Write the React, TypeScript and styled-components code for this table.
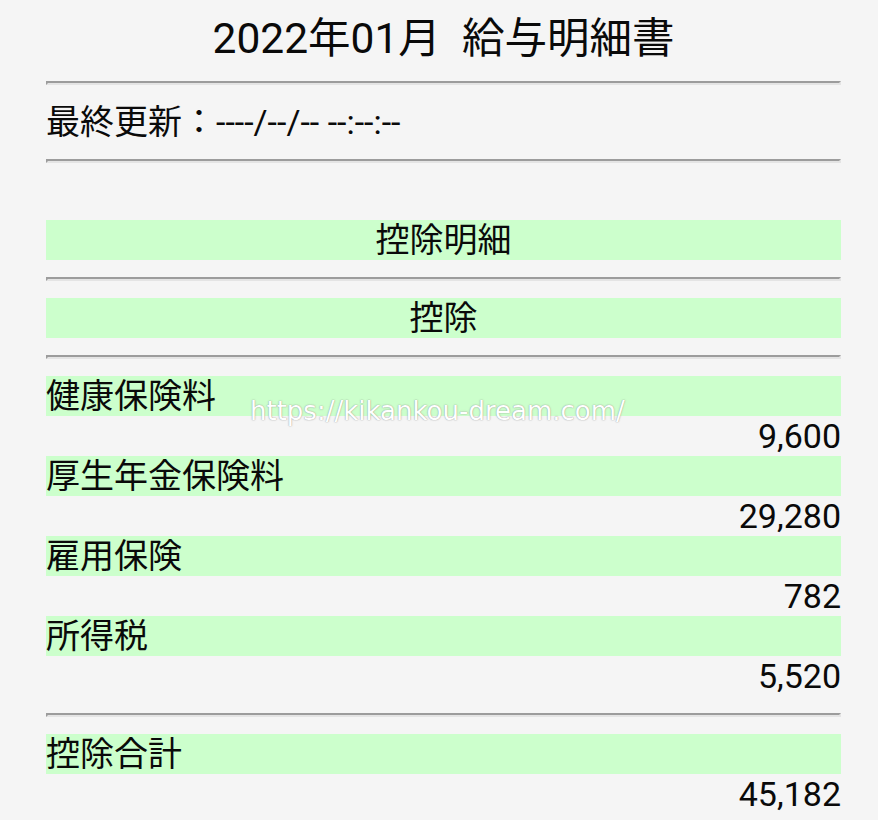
import React from "react";
import styled, { createGlobalStyle } from "styled-components";

const GlobalStyle = createGlobalStyle`
  html, body {
    margin: 0;
    padding: 0;
    background: #f5f5f5;
  }
  body {
    font-family: Roboto, "Noto Sans CJK JP", "Noto Sans", sans-serif;
    color: #0a0a0a;
  }
`;

const Page = styled.div`
  position: relative;
  box-sizing: border-box;
  width: 795px;
  margin-left: 46px;
  padding-top: 14px;
  padding-bottom: 6px;
`;

const Title = styled.h1`
  margin: 0;
  font-size: 42.5px;
  line-height: 50px;
  font-weight: 400;
  text-align: center;
  white-space: pre;
`;

const Rule = styled.hr`
  margin: 17px 0;
  height: 0;
  border-style: solid;
  border-width: 2px;
  border-color: #9c9c9c #e4e4e4 #e4e4e4 #9c9c9c;
  box-sizing: content-box;
`;

const Line = styled.div<{ $align?: "left" | "center" | "right"; $band?: boolean }>`
  height: 40px;
  line-height: 40px;
  font-size: 34px;
  white-space: pre;
  text-align: ${(p) => p.$align ?? "left"};
  background: ${(p) => (p.$band ? "#ccffcc" : "transparent")};
`;

const Watermark = styled.div`
  position: absolute;
  left: 204px;
  top: 398px;
  font-family: "DejaVu Sans", sans-serif;
  font-size: 26px;
  line-height: 26px;
  color: #ffffff;
  white-space: nowrap;
  pointer-events: none;
  text-shadow: 0 0 1px rgba(110, 110, 110, 0.7), 0 0 2px rgba(140, 140, 140, 0.4);
`;

const items = [
  { label: "健康保険料", value: "9,600" },
  { label: "厚生年金保険料", value: "29,280" },
  { label: "雇用保険", value: "782" },
  { label: "所得税", value: "5,520" },
];

export default function App() {
  return (
    <>
      <GlobalStyle />
      <Page>
        <Title>{"2022年01月  給与明細書"}</Title>
        <Rule />
        <Line>最終更新：----/--/-- --:--:--</Line>
        <Rule />
        <Line />
        <Line $band $align="center">控除明細</Line>
        <Rule />
        <Line $band $align="center">控除</Line>
        <Rule />
        {items.map((it) => (
          <React.Fragment key={it.label}>
            <Line $band>{it.label}</Line>
            <Line $align="right">{it.value}</Line>
          </React.Fragment>
        ))}
        <Rule />
        <Line $band>控除合計</Line>
        <Line $align="right">45,182</Line>
        <Watermark>https://kikankou-dream.com/</Watermark>
      </Page>
    </>
  );
}
